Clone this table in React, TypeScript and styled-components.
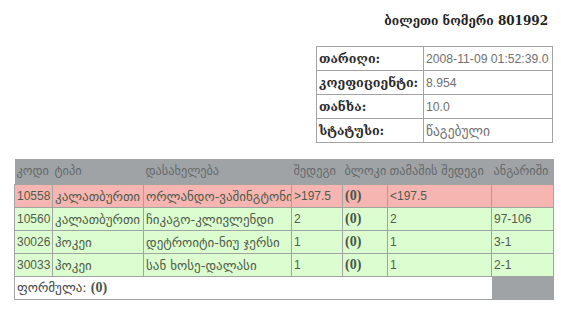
import React from "react";
import styled, { createGlobalStyle } from "styled-components";

interface Bet {
  code: string;
  type: string;
  name: string;
  bet: string;
  block: string;
  exact: string;
  score: string;
  lost?: boolean;
}

const bets: Bet[] = [
  { code: "10558", type: "კალათბურთი", name: "ორლანდო-ვაშინგტონი", bet: ">197.5", block: "(0)", exact: "<197.5", score: "", lost: true },
  { code: "10560", type: "კალათბურთი", name: "ჩიკაგო-კლივლენდი", bet: "2", block: "(0)", exact: "2", score: "97-106" },
  { code: "30026", type: "ჰოკეი", name: "დეტროიტი-ნიუ ჯერსი", bet: "1", block: "(0)", exact: "1", score: "3-1" },
  { code: "30033", type: "ჰოკეი", name: "სან ხოსე-დალასი", bet: "1", block: "(0)", exact: "1", score: "2-1" },
];

const info = [
  { label: "თარიღი:", value: "2008-11-09 01:52:39.0", num: true },
  { label: "კოეფიციენტი:", value: "8.954", num: true },
  { label: "თანხა:", value: "10.0", num: true },
  { label: "სტატუსი:", value: "წაგებული", num: false },
];

const colWidths = [38, 91, 148, 51, 45, 104, 62];

export default function App() {
  return (
    <>
      <GlobalStyle />
      <Page>
        <Title>ბილეთი ნომერი 801992</Title>
        <InfoTable>
          <tbody>
            {info.map((row) => (
              <tr key={row.label}>
                <InfoLabel>{row.label}</InfoLabel>
                <InfoValue $num={row.num}>{row.value}</InfoValue>
              </tr>
            ))}
          </tbody>
        </InfoTable>
        <BetTable>
          <colgroup>
            {colWidths.map((w, i) => (
              <col key={i} style={{ width: w }} />
            ))}
          </colgroup>
          <thead>
            <tr>
              <Th>კოდი</Th>
              <Th>ტიპი</Th>
              <Th>დასახელება</Th>
              <Th>შედეგი</Th>
              <Th>ბლოკი</Th>
              <Th>თამაშის შედეგი</Th>
              <Th>ანგარიში</Th>
            </tr>
          </thead>
          <tbody>
            {bets.map((b) => (
              <Row key={b.code} $lost={b.lost}>
                <Td $num>{b.code}</Td>
                <Td>{b.type}</Td>
                <Td>{b.name}</Td>
                <Td $num>{b.bet}</Td>
                <Td>
                  <Bold>{b.block}</Bold>
                </Td>
                <Td $num>{b.exact}</Td>
                <Td $num>{b.score}</Td>
              </Row>
            ))}
            <tr>
              <FooterCell colSpan={6}>
                ფორმულა: <Bold>(0)</Bold>
              </FooterCell>
              <FooterGray />
            </tr>
          </tbody>
        </BetTable>
      </Page>
    </>
  );
}

const GlobalStyle = createGlobalStyle`
  body {
    margin: 0;
    background: #fff;
    font-family: "DejaVu Sans", sans-serif;
  }
`;

const Page = styled.div`
  width: 561px;
  height: 331px;
  display: flex;
  flex-direction: column;
  align-items: flex-end;
  padding: 13px 8px 0 14px;
  box-sizing: border-box;
`;

const Title = styled.div`
  font-family: "DejaVu Serif", serif;
  font-weight: bold;
  font-size: 12px;
  color: #222;
  padding-right: 5px;
  height: 20px;
  line-height: 16px;
`;

const InfoTable = styled.table`
  margin-top: 13px;
  width: 237px;
  border-collapse: collapse;
  border: 1px solid #a3a3a3;
`;

const InfoLabel = styled.td`
  width: 103px;
  height: 23px;
  padding: 0 1px 0 2px;
  border: 1px solid #a3a3a3;
  font-family: "DejaVu Serif", serif;
  font-weight: bold;
  color: #2a2a2a;
  white-space: nowrap;
  font-size: 12.5px;
`;

const InfoValue = styled.td<{ $num?: boolean }>`
  padding: 0 2px;
  border: 1px solid #a3a3a3;
  color: #707070;
  white-space: nowrap;
  font-family: ${(p) => (p.$num ? `"Liberation Sans", sans-serif` : `"DejaVu Sans", sans-serif`)};
  font-size: ${(p) => (p.$num ? "12.2px" : "13.5px")};
`;

const BetTable = styled.table`
  align-self: flex-start;
  margin-top: 16px;
  width: 539px;
  table-layout: fixed;
  border-collapse: collapse;
`;

const Th = styled.th`
  height: 23px;
  padding: 0 1px 2px 2px;
  background: #9fa3a6;
  color: #66696b;
  font-weight: normal;
  text-align: left;
  white-space: nowrap;
  overflow: hidden;
  font-size: 12.3px;
`;

const Row = styled.tr<{ $lost?: boolean }>`
  background: ${(p) => (p.$lost ? "#f6b5b1" : "#dcfdcf")};
`;

const Td = styled.td<{ $num?: boolean }>`
  height: 22px;
  padding: 0 2px;
  border: 1px solid #a1a5a2;
  color: #505c4c;
  white-space: nowrap;
  overflow: hidden;
  font-family: ${(p) => (p.$num ? `"Liberation Sans", sans-serif` : `"DejaVu Sans", sans-serif`)};
  font-size: ${(p) => (p.$num ? "12px" : "13px")};
`;

const Bold = styled.b`
  font-family: "Liberation Serif", serif;
  font-size: 14px;
  color: #4a5548;
`;

const FooterCell = styled.td`
  height: 22px;
  padding: 0 2px;
  border: 1px solid #a1a5a2;
  border-right: none;
  color: #444;
  font-size: 13px;
`;

const FooterGray = styled.td`
  background: #9fa3a6;
  border-bottom: 1px solid #9fa3a6;
`;
